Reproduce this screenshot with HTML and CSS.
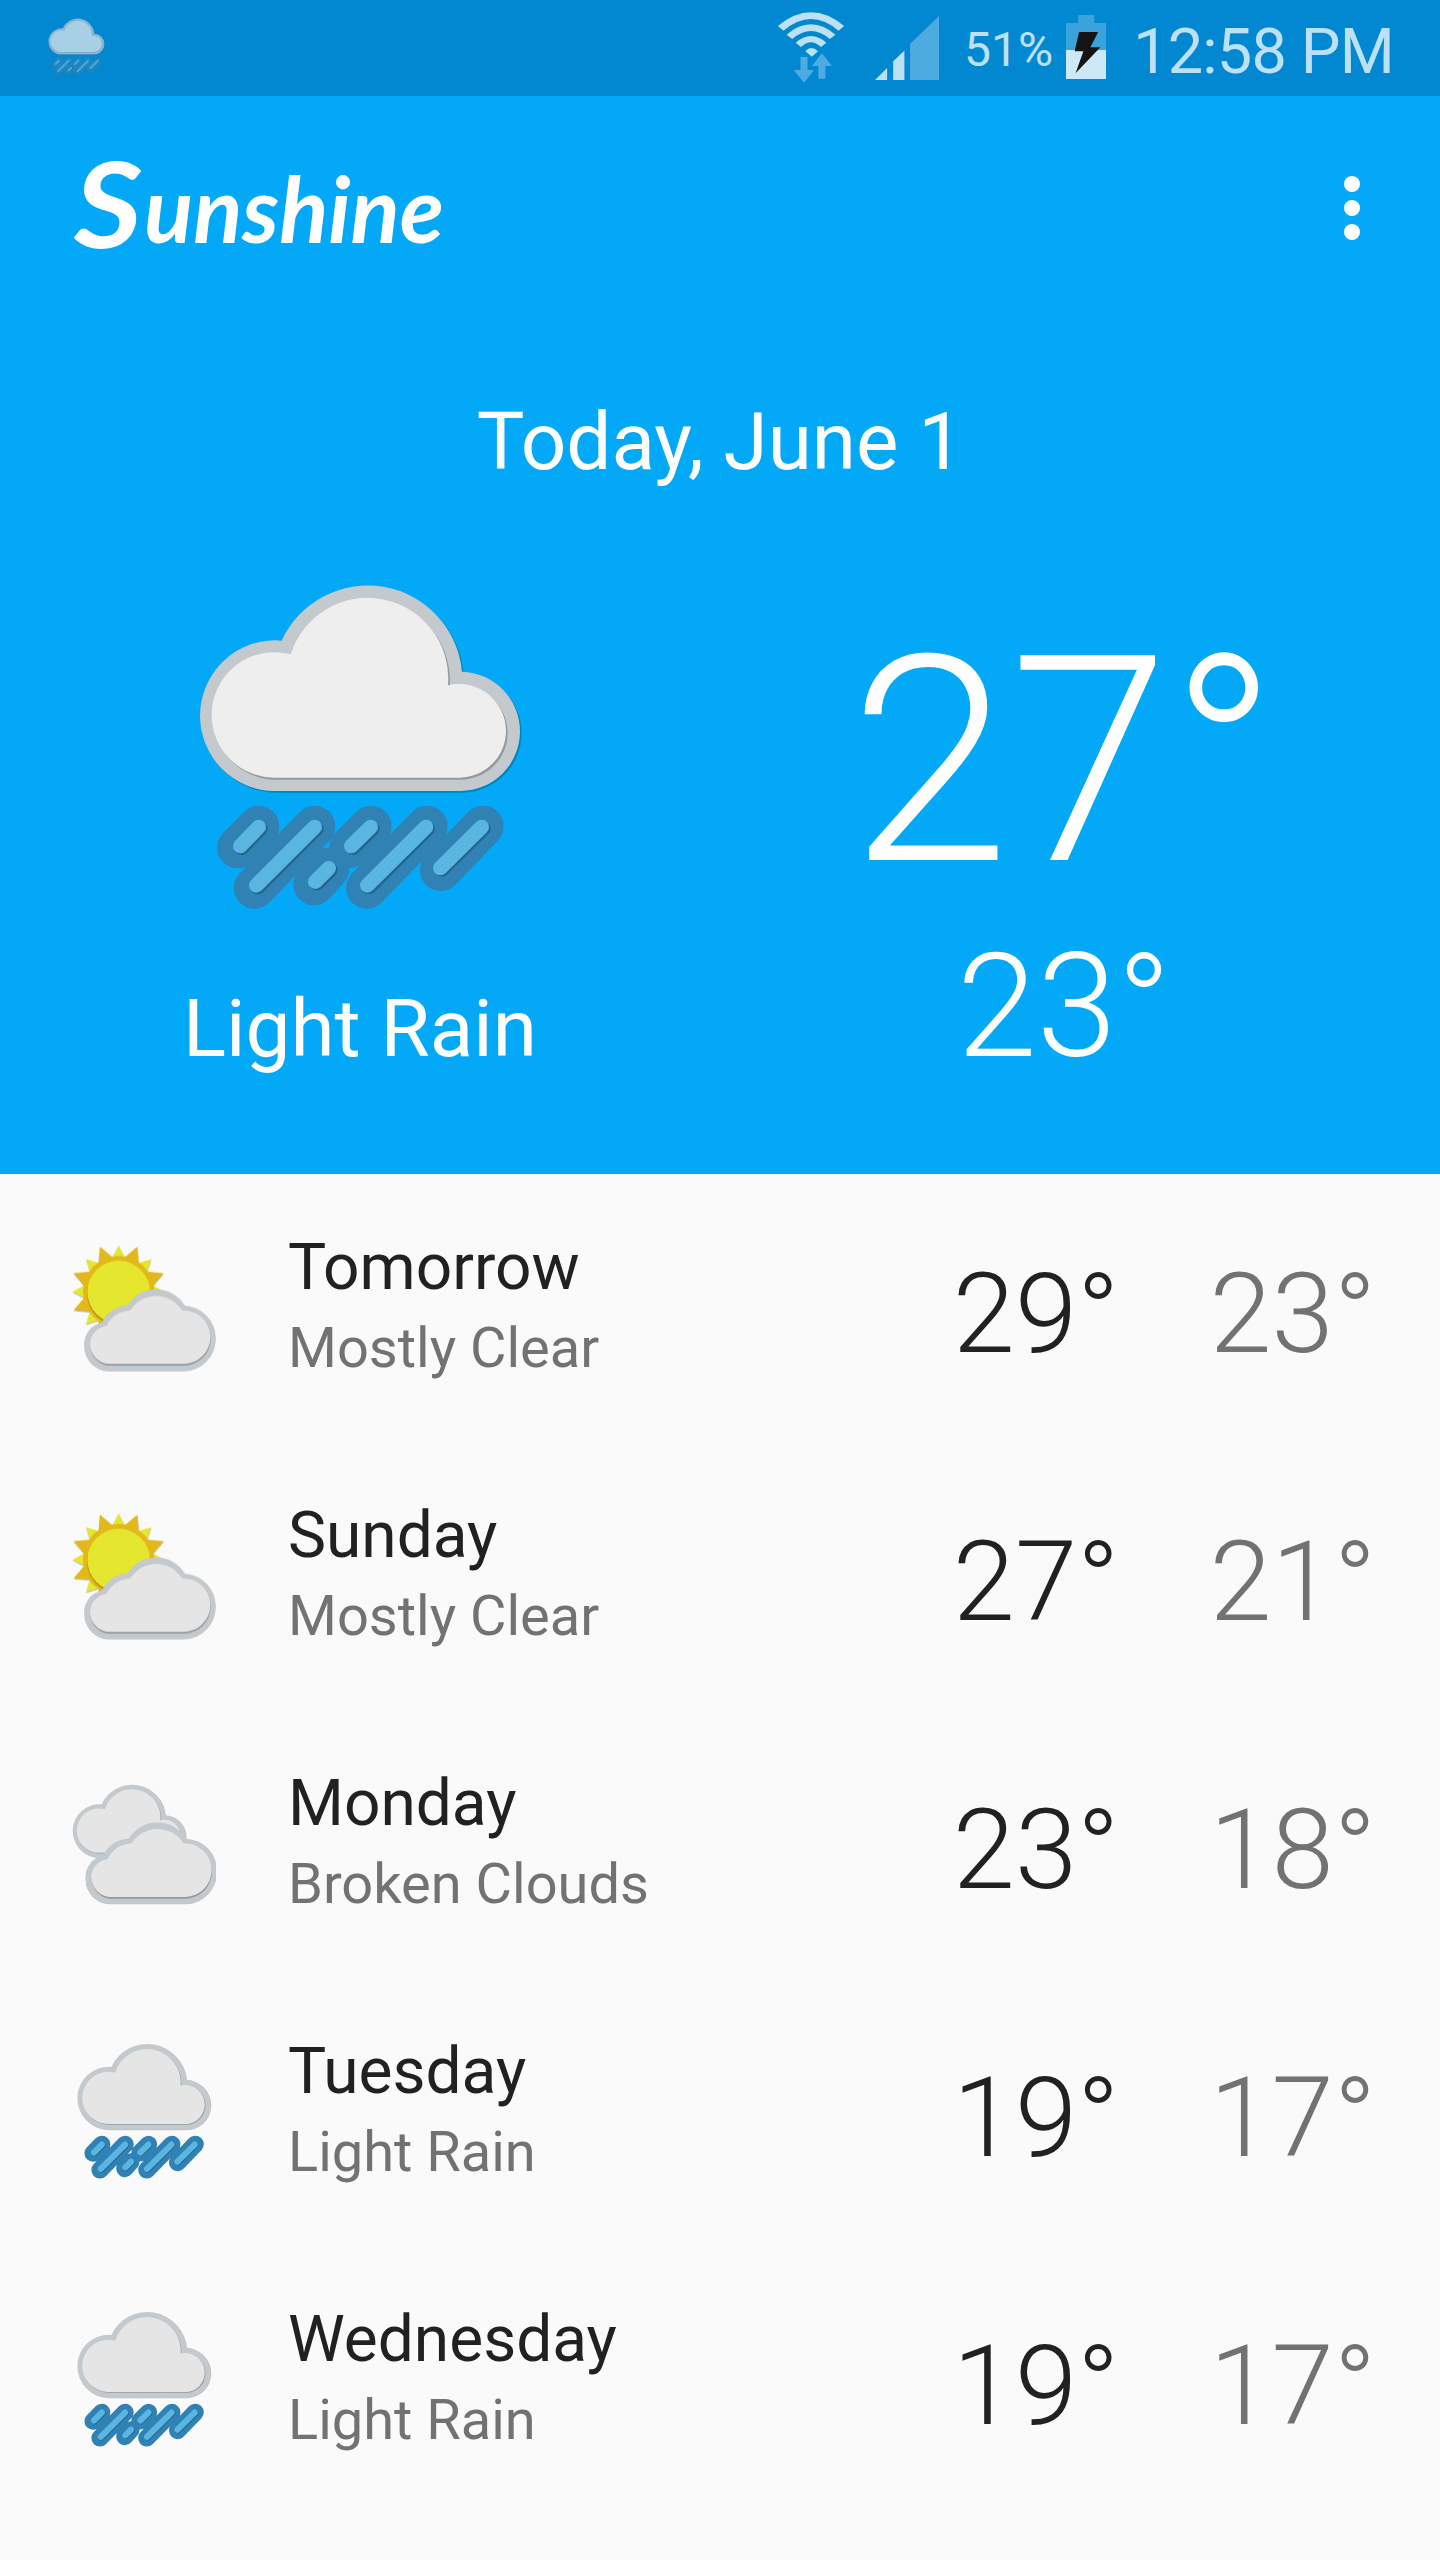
FILE: index.html
```html
<!DOCTYPE html>
<html lang="en">
<head>
<meta charset="utf-8">
<title>Sunshine</title>
<link rel="stylesheet" href="styles.css">
</head>
<body>
<svg class="defs" aria-hidden="true">
  <defs>
    <path id="cloud-outer" d="M282 693A225 227 0 0 1 60 468A225 227 0 0 1 305 242A284 284 0 0 1 846 335A179 179 0 0 1 1020 514A179 179 0 0 1 842 693Z"/>
    <path id="cloud-inner" d="M282 653A188 188 0 0 1 95 466A188 188 0 0 1 332 283A242 242 0 0 1 804 376A141 141 0 0 1 978 512A141 141 0 0 1 840 653Z"/>
    <path id="drops" d="M236 801L181 858M404 801L229 976M446 925L406 965M572 801L514 858M738 801L562 976M905 801L781 924"/>
    <path id="drops-outline" d="M236 799L173 863M404 799L223 984M446 925L402 974M573 799L511 861M741 799L560 984M909 799L782 931"/>
    <g id="cloud">
      <use href="#cloud-outer" x="5" y="5" class="drop-shadow"/>
      <use href="#cloud-outer" class="rim"/>
      <use href="#cloud-inner" x="5" y="6" class="inner-shadow"/>
      <use href="#cloud-inner"/>
    </g>
    <g id="rain">
      <use href="#drops-outline" class="rain-outline"/>
      <use href="#drops" x="5" y="5" class="rain-shadow"/>
      <use href="#drops" class="rain-drops"/>
    </g>
    <path id="wide-outer" d="M175 451A73 74 0 0 1 103 377A66 66 0 0 1 156 307A85 85 0 0 1 232 257A101 101 0 0 1 405 257A97 97 0 0 1 497 355A96 96 0 0 1 403 451Z"/>
    <path id="wide-inner" d="M180 432A60 60 0 0 1 120 372A56 56 0 0 1 169 318Q190 275 241 271A91 91 0 0 1 396 271A81 81 0 0 1 481 352A81 81 0 0 1 402 432Z"/>
    <g id="wide-cloud">
      <use href="#wide-outer" y="3" class="drop-shadow"/>
      <use href="#wide-outer" class="rim"/>
      <use href="#wide-inner" x="1" y="5" class="inner-shadow"/>
      <use href="#wide-inner"/>
    </g>
    <g id="ray-pair">
      <path class="sun-disc" d="M-18 -104L0 -138L18 -104Z"/>
      <path class="sun-rim" transform="rotate(22.5)" d="M-23 -102L0 -146L23 -102Z"/>
    </g>
    <g id="sun">
      <use href="#ray-pair"/>
      <use href="#ray-pair" transform="rotate(45)"/>
      <use href="#ray-pair" transform="rotate(90)"/>
      <use href="#ray-pair" transform="rotate(135)"/>
      <use href="#ray-pair" transform="rotate(180)"/>
      <use href="#ray-pair" transform="rotate(225)"/>
      <use href="#ray-pair" transform="rotate(270)"/>
      <use href="#ray-pair" transform="rotate(315)"/>
    </g>
    <symbol id="icon-clear" viewBox="66 48 432 432">
      <use href="#sun" transform="translate(206 218)" class="sun-shadow"/>
      <use href="#sun" transform="translate(206 215)"/>
      <circle class="sun-rim" cx="206" cy="215" r="107"/>
      <circle class="sun-groove" cx="205" cy="221" r="94"/>
      <circle class="sun-disc" cx="206" cy="216" r="94"/>
      <use href="#wide-cloud"/>
    </symbol>
    <symbol id="icon-clouds" viewBox="66 36 432 432">
      <use href="#cloud" transform="translate(46.8 47.4) scale(.354)"/>
      <use href="#wide-cloud" x="4" y="-21"/>
    </symbol>
    <symbol id="icon-rain" viewBox="21.6 48 1037 1037">
      <use href="#cloud"/>
      <use href="#rain"/>
    </symbol>
    <symbol id="icon-rain-large" viewBox="0 0 1080 1110">
      <use href="#cloud"/>
      <use href="#rain"/>
    </symbol>
  </defs>
</svg>

<header class="status-bar">
  <svg class="status-weather"><use href="#icon-rain-large"/></svg>
  <div class="status-right">
    <svg class="wifi" viewBox="40 30 156 222" preserveAspectRatio="none">
      <path class="on" d="M42 78Q118 -4 194 78L181 92Q118 22 55 92ZM62 104Q118 42 174 104L161 117Q118 69 75 117ZM83 128Q118 88 153 128L141 141Q118 113 95 141ZM105 154Q118 134 134 154L120 170Z"/>
      <path class="off" d="M94 171H110V210H125L102 248L78 210H94ZM143 160L166 198H151V236H135V198H120Z"/>
    </svg>
    <svg class="signal" viewBox="265 48 148 192" preserveAspectRatio="none">
      <path class="on" d="M265 240L293 204V240ZM307 184L333 152V240H307Z"/>
      <path class="off" d="M346 132L413 48V240H346Z"/>
    </svg>
    <span class="battery-level">51%</span>
    <svg class="battery" viewBox="701 45 92 192" preserveAspectRatio="none">
      <path class="battery-empty" d="M729 45H766V69H793V150H701V69H729Z"/>
      <path class="battery-full" d="M701 150H793V237H701Z"/>
      <path class="bolt" d="M731 96H775L757 142H780L723 220L741 154H721Z"/>
    </svg>
    <span class="clock">12:58 PM</span>
  </div>
</header>

<main>
  <section class="today">
    <div class="app-bar">
      <svg class="logo" viewBox="0 0 380 110" role="img" aria-label="Sunshine">
        <text><tspan class="logo-cap" x="2" y="95" textLength="68" lengthAdjust="spacingAndGlyphs">S</tspan><tspan x="72" y="90" textLength="300" lengthAdjust="spacingAndGlyphs">unshine</tspan></text>
      </svg>
      <div class="menu"><i></i><i></i><i></i></div>
    </div>
    <h1 class="date">Today, June 1</h1>
    <div class="current">
      <div class="condition">
        <svg class="condition-icon"><use href="#icon-rain-large"/></svg>
        <p class="condition-text">Light Rain</p>
      </div>
      <div class="temps">
        <p class="high">27°</p>
        <p class="low">23°</p>
      </div>
    </div>
  </section>

  <ul class="forecast">
    <li class="day">
      <svg class="day-icon"><use href="#icon-clear"/></svg>
      <div class="day-text"><p class="name">Tomorrow</p><p class="desc">Mostly Clear</p></div>
      <span class="max">29°</span><span class="min">23°</span>
    </li>
    <li class="day">
      <svg class="day-icon"><use href="#icon-clear"/></svg>
      <div class="day-text"><p class="name">Sunday</p><p class="desc">Mostly Clear</p></div>
      <span class="max">27°</span><span class="min">21°</span>
    </li>
    <li class="day">
      <svg class="day-icon"><use href="#icon-clouds"/></svg>
      <div class="day-text"><p class="name">Monday</p><p class="desc">Broken Clouds</p></div>
      <span class="max">23°</span><span class="min">18°</span>
    </li>
    <li class="day">
      <svg class="day-icon"><use href="#icon-rain"/></svg>
      <div class="day-text"><p class="name">Tuesday</p><p class="desc">Light Rain</p></div>
      <span class="max">19°</span><span class="min">17°</span>
    </li>
    <li class="day">
      <svg class="day-icon"><use href="#icon-rain"/></svg>
      <div class="day-text"><p class="name">Wednesday</p><p class="desc">Light Rain</p></div>
      <span class="max">19°</span><span class="min">17°</span>
    </li>
  </ul>
</main>
</body>
</html>
```
FILE: styles.css
```css
* { box-sizing: border-box; margin: 0; padding: 0; }

body {
  width: 1440px;
  height: 2560px;
  overflow: hidden;
  background: #fafafa;
  color: #212121;
  font-family: Roboto, "Noto Sans", sans-serif;
}

svg { display: block; flex: none; }
.defs { position: absolute; width: 0; height: 0; }

/* Weather artwork */
.drop-shadow { fill: #000; opacity: .22; }
.rim { fill: #c3c9cd; }
.inner-shadow { fill: #94999c; }
.rain-outline { fill: none; stroke: #3082b5; stroke-width: 124; stroke-linecap: round; }
.rain-shadow { fill: none; stroke: #22668f; stroke-width: 44; stroke-linecap: round; }
.rain-drops { fill: none; stroke: #5bb5e1; stroke-width: 44; stroke-linecap: round; }
.sun-rim { fill: #e3b919; }
.sun-disc { fill: #e5e62e; }
.sun-groove { fill: #b58f18; }
.sun-shadow { opacity: .25; filter: brightness(0); }

/* Status bar */
.status-bar {
  display: flex;
  justify-content: space-between;
  height: 96px;
  padding: 0 46px 0 45px;
  background: #0288d1;
}
.status-weather { width: 63px; height: 65px; margin-top: 14px; fill: #eee; opacity: .7; }
.status-right { display: flex; align-items: flex-start; color: #bde1f4; }
.wifi { width: 68px; height: 74px; margin: 10px 30px 0 0; }
.signal { width: 64px; height: 64px; margin: 16px 25px 0 0; }
.on { fill: #bde1f4; }
.off { fill: #4eabe0; }
.battery { width: 40px; height: 64px; margin: 15px 27px 0 13px; }
.battery-empty { fill: #3ba3dc; }
.battery-full { fill: #cde8f6; }
.bolt { fill: #141414; }
.battery-level { font-size: 48px; line-height: 56px; margin-top: 22px; }
.clock { font-size: 63px; line-height: 76px; margin-top: 14px; letter-spacing: -.8px; }

/* Today panel */
.today { height: 1078px; background: #03a9f7; color: #fff; }
.app-bar {
  display: flex;
  align-items: center;
  justify-content: space-between;
  height: 224px;
  padding: 0 80px 0 72px;
}
.logo { width: 380px; height: 110px; overflow: visible; }
.logo text { font: italic 700 92px Lato, cursive; fill: #fff; }
.logo .logo-cap { font-size: 118px; }
.menu { display: flex; flex-direction: column; gap: 8px; }
.menu i { width: 16px; height: 16px; border-radius: 50%; background: #fff; }
.date { height: 94px; margin-top: 75px; font-size: 80px; font-weight: 400; line-height: 94px; text-align: center; }
.current { display: grid; grid-template-columns: 1fr 1fr; margin-top: 71px; }
.condition { display: flex; flex-direction: column; align-items: center; }
.condition-icon { width: 360px; height: 370px; fill: #eee; }
.condition-text { margin-top: 52px; font-size: 80px; line-height: 94px; }
.temps { padding-right: 32px; text-align: center; font-weight: 300; }
.high { font-size: 288px; line-height: 320px; margin-top: 42px; }
.low { font-size: 144px; line-height: 169px; }

/* Forecast list */
.forecast { list-style: none; }
.day { display: flex; align-items: center; height: 268px; padding: 0 64px 0 72px; }
.day-icon { width: 144px; height: 144px; margin-right: 72px; fill: #e5e5e5; }
.day-text { flex: 1; margin-bottom: 5px; }
.name { font-size: 64px; line-height: 76px; }
.desc { font-size: 56px; line-height: 66px; margin-top: 9px; color: #727272; }
.max, .min { margin-top: 12px; font-size: 112px; font-weight: 300; line-height: 132px; }
.min { margin-left: 90px; color: #727272; }
```
